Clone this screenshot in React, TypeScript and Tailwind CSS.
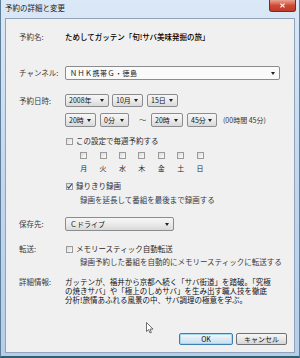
import React from "react";

const font = { fontFamily: '"Noto Sans CJK JP", "Noto Sans", sans-serif' };

function Select({ label, className }: { label: string; className: string }) {
  return (
    <div
      className={
        "flex items-center justify-between rounded-[2px] border border-[#8a8c8e] bg-gradient-to-b from-[#f6f6f6] via-[#ebebeb] to-[#d9d9d9] pl-[3px] pr-[4px] text-[7px] leading-none text-[#111] " +
        className
      }
    >
      <span>{label}</span>
      <span className="h-0 w-0 border-x-[2.5px] border-t-[3px] border-x-transparent border-t-[#222]" />
    </div>
  );
}

function Check({ checked }: { checked?: boolean }) {
  return (
    <span className="relative flex h-[7px] w-[7px] shrink-0 items-center justify-center border border-[#9a9a9a] bg-gradient-to-br from-[#dcdcdc] to-[#fbfbfb]">
      {checked && (
        <svg viewBox="0 0 7 7" className="absolute h-[7px] w-[7px]">
          <path d="M1.3 3.6 L2.8 5.2 L5.8 1.2" fill="none" stroke="#2a4a8a" strokeWidth="1.1" />
        </svg>
      )}
    </span>
  );
}

export default function App() {
  const days = ["月", "火", "水", "木", "金", "土", "日"];

  return (
    <div
      style={font}
      className="relative flex h-[358px] w-[300px] flex-col overflow-hidden border-b-[2px] border-l border-r border-b-[#2f5f70] border-l-[#5d7f9c] border-r-[#5d7f9c] bg-gradient-to-b from-[#dbe8f6] via-[#c3d7ee] to-[#b7cee9]"
    >
      {/* title bar */}
      <div className="flex h-[18px] shrink-0 items-start justify-between pl-[4px] pr-[3px]">
        <span className="mt-[3px] text-[7.5px] leading-[10px] text-[#1b1b1b]">予約の詳細と変更</span>
        <div className="flex h-[12px] w-[27px] items-center justify-center rounded-b-[3px] border border-t-0 border-[#7a2a22] bg-gradient-to-b from-[#e8a293] via-[#cf4a35] to-[#c0392b]">
          <svg viewBox="0 0 8 6" className="h-[5px] w-[7px]">
            <path d="M1.5 0.8 L6.5 5.2 M6.5 0.8 L1.5 5.2" stroke="#fff" strokeWidth="1.4" />
          </svg>
        </div>
      </div>

      {/* client panel */}
      <div className="mx-[4px] mb-[3px] flex flex-1 flex-col border border-[#8fa3bb] bg-[#f0f0f0] pl-[13px] pr-[7px] text-[7.5px] leading-none text-[#2a2a2a]">
        <div className="mt-[11px] flex h-[14px] items-center">
          <span className="w-[46px] text-[#3a3a3a]">予約名:</span>
          <span className="font-medium text-[#000]">ためしてガッテン「旬!サバ美味発掘の旅」</span>
        </div>

        <div className="mt-[22px] flex h-[14px] items-center">
          <span className="w-[46px] text-[#3a3a3a]">チャンネル:</span>
          <Select label="ＮＨＫ携帯Ｇ・徳島" className="h-[14px] w-[215px] !bg-none bg-[#fafafa] pl-[4px] tracking-[0.5px]" />
        </div>

        <div className="mt-[14px] flex h-[13px] items-center">
          <span className="w-[46px] text-[#3a3a3a]">予約日時:</span>
          <Select label="2008年" className="h-[13px] w-[44px]" />
          <Select label="10月" className="ml-[3px] h-[13px] w-[31px]" />
          <Select label="15日" className="ml-[4px] h-[13px] w-[31px]" />
        </div>

        <div className="mt-[6px] flex h-[14px] items-center pl-[46px]">
          <Select label="20時" className="h-[14px] w-[31px]" />
          <Select label="0分" className="ml-[4px] h-[14px] w-[29px]" />
          <span className="ml-[10px] w-[12px] text-[#444]">～</span>
          <Select label="20時" className="ml-[0px] h-[14px] w-[32px]" />
          <Select label="45分" className="ml-[4px] h-[14px] w-[30px]" />
          <span className="ml-[6px] text-[7px] text-[#333]">(00時間 45分)</span>
        </div>

        <div className="mt-[8px] flex h-[12px] items-center gap-[3px] pl-[47px]">
          <Check />
          <span>この設定で毎週予約する</span>
        </div>

        <div className="mt-[5px] flex h-[7px] pl-[55px]">
          {days.map((d) => (
            <div key={d} className="flex w-[19.4px] justify-center">
              <Check />
            </div>
          ))}
        </div>
        <div className="mt-[4px] flex h-[10px] items-center pl-[55px]">
          {days.map((d) => (
            <div key={d} className="flex w-[19.4px] justify-center text-[7px]">
              {d}
            </div>
          ))}
        </div>

        <div className="mt-[7px] flex h-[12px] items-center gap-[3px] pl-[47px]">
          <Check checked />
          <span>録りきり録画</span>
        </div>
        <div className="mt-[3px] flex h-[10px] items-center pl-[61px] text-[#3a3a3a]">
          録画を延長して番組を最後まで録画する
        </div>

        <div className="mt-[12px] flex h-[14px] items-center">
          <span className="w-[46px] text-[#3a3a3a]">保存先:</span>
          <Select label="Ｃドライブ" className="h-[14px] w-[109px] pl-[4px]" />
        </div>

        <div className="mt-[12px] flex h-[12px] items-center">
          <span className="w-[47px] text-[#3a3a3a]">転送:</span>
          <Check />
          <span className="ml-[3px]">メモリースティック自動転送</span>
        </div>
        <div className="mt-[2px] flex h-[10px] items-center pl-[61px] text-[#3a3a3a]">
          録画予約した番組を自動的にメモリースティックに転送する
        </div>

        <div className="mt-[10px] flex">
          <span className="w-[46px] leading-[9px] text-[#3a3a3a]">詳細情報:</span>
          <p className="leading-[9px] text-[#111]">
            ガッテンが、福井から京都へ続く「サバ街道」を踏破。「究極
            <br />
            の焼きサバ」や「極上のしめサバ」を生み出す職人技を徹底
            <br />
            分析!旅情あふれる風景の中、サバ調理の極意を学ぶ。
          </p>
        </div>

        <div className="mt-auto mb-[7px] flex justify-end gap-[3px]">
          <button className="flex h-[12px] w-[54px] items-center justify-center rounded-[2px] border border-[#3c7fb1] bg-gradient-to-b from-[#f2f8fc] via-[#dceaf4] to-[#c8deee] text-[7px] leading-none text-[#111] shadow-[inset_0_0_0_1px_#a8d8f0]">
            OK
          </button>
          <button className="flex h-[12px] w-[51px] items-center justify-center rounded-[2px] border border-[#707070] bg-gradient-to-b from-[#f6f6f6] via-[#e8e8e8] to-[#d6d6d6] text-[7px] leading-none text-[#111]">
            キャンセル
          </button>
        </div>
      </div>

      {/* mouse pointer */}
      <svg viewBox="0 0 8 12" className="absolute left-[145px] top-[322px] h-[12px] w-[8px]">
        <path d="M0.5 0.5 L0.5 9.5 L2.6 7.6 L4 11 L5.4 10.4 L4 7.1 L7 7.1 Z" fill="#fff" stroke="#333" strokeWidth="0.7" />
      </svg>
    </div>
  );
}
